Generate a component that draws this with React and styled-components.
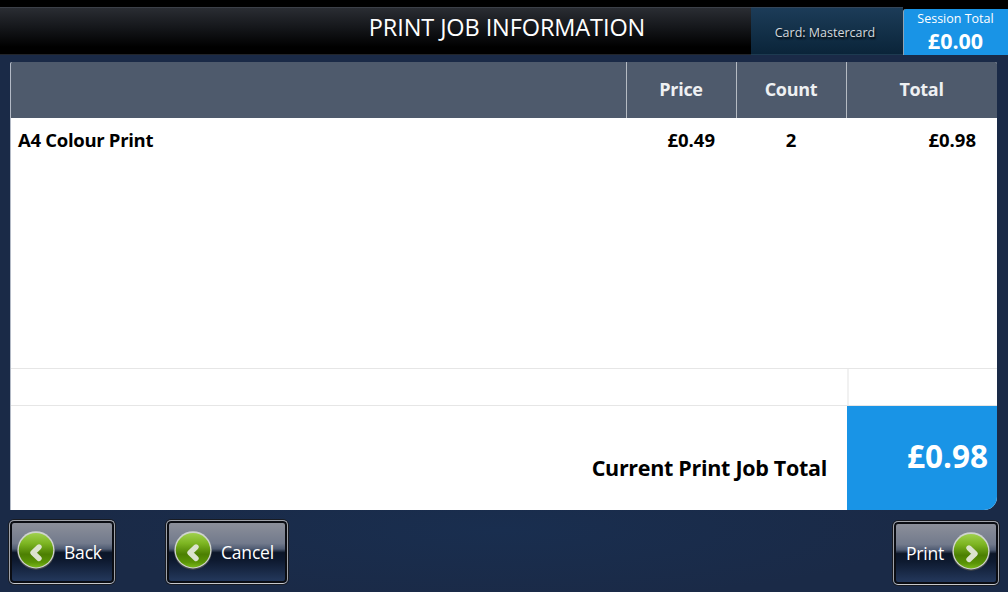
import React from 'react'
import styled, {createGlobalStyle} from 'styled-components'

const GlobalStyle = createGlobalStyle`
  html, body {
    margin: 0;
    padding: 0;
    height: 100%;
    background: #1a2b49;
  }
  * {
    box-sizing: border-box;
  }
`

const rows = [
  {name: 'A4 Colour Print', price: '£0.49', count: '2', total: '£0.98'},
]

const RoundArrow = ({flip}) => (
  <ArrowIcon width="38" height="39" viewBox="0 0 38 39">
    <defs>
      <linearGradient id={flip ? 'ballR' : 'ballL'} x1="0" y1="0" x2="0" y2="1">
        <stop offset="0" stopColor="#9fd04e" />
        <stop offset="0.3" stopColor="#7db522" />
        <stop offset="0.62" stopColor="#4c7f02" />
        <stop offset="0.85" stopColor="#5a9406" />
        <stop offset="1" stopColor="#7ab81a" />
      </linearGradient>
    </defs>
    <circle cx="19" cy="20" r="18.8" fill="#45484a" />
    <circle cx="19" cy="18.8" r="18.6" fill="#cfd4cf" />
    <circle cx="19" cy="19.2" r="17.2" fill={`url(#${flip ? 'ballR' : 'ballL'})`} />
    <path
      d={flip ? 'M17 16 L23 21.8 L17 27.5' : 'M22 16 L16 21.8 L22 27.5'}
      fill="none"
      stroke="#dce3cf"
      strokeWidth="5.4"
      strokeLinecap="round"
      strokeLinejoin="round"
    />
  </ArrowIcon>
)

export default function App() {
  return (
    <Screen>
      <GlobalStyle />
      <TopBar>
        <Title>PRINT JOB INFORMATION</Title>
        <CardBox>Card: Mastercard</CardBox>
        <SessionBox>
          <SessionLabel>Session Total</SessionLabel>
          <SessionValue>£0.00</SessionValue>
        </SessionBox>
      </TopBar>

      <Panel>
        <HeadRow>
          <HeadCell />
          <HeadCell $divider>Price</HeadCell>
          <HeadCell $divider>Count</HeadCell>
          <HeadCell $divider>Total</HeadCell>
        </HeadRow>
        <ItemList>
          {rows.map((row) => (
            <ItemRow key={row.name}>
              <ItemName>{row.name}</ItemName>
              <ItemPrice>{row.price}</ItemPrice>
              <ItemCount>{row.count}</ItemCount>
              <ItemTotal>{row.total}</ItemTotal>
            </ItemRow>
          ))}
        </ItemList>
        <SpacerRow>
          <SpacerMain />
          <SpacerSide />
        </SpacerRow>
        <TotalRow>
          <TotalLabel>Current Print Job Total</TotalLabel>
          <TotalValue>£0.98</TotalValue>
        </TotalRow>
      </Panel>

      <BottomBar>
        <NavGroup>
          <NavButton $width={106}>
            <RoundArrow />
            <span>Back</span>
          </NavButton>
          <NavButton $width={122}>
            <RoundArrow />
            <span>Cancel</span>
          </NavButton>
        </NavGroup>
        <NavButton $width={106} $right>
          <span>Print</span>
          <RoundArrow flip />
        </NavButton>
      </BottomBar>
    </Screen>
  )
}

const Screen = styled.div`
  display: flex;
  flex-direction: column;
  width: 1008px;
  height: 592px;
  overflow: hidden;
  font-family: "Open Sans", "Noto Sans", sans-serif;
  background: radial-gradient(ellipse 420px 70px at 500px 530px, #192e4f, #1a2a47);
`

const TopBar = styled.header`
  display: flex;
  flex: none;
  height: 55px;
  padding-top: 7px;
  background: #000;
`

const Title = styled.h1`
  flex: 1;
  margin: 0;
  padding-top: 3px;
  padding-left: 263px;
  text-align: center;
  font-size: 23.5px;
  letter-spacing: -0.1px;
  line-height: 32px;
  font-weight: 400;
  color: #fff;
  border-top: 1px solid #3c4048;
  border-bottom: 1px solid #22252b;
  background: linear-gradient(#2a2d33, #16181c 40%, #000 85%);
`

const CardBox = styled.div`
  display: flex;
  align-items: center;
  justify-content: center;
  flex: none;
  width: 152px;
  padding: 2px 4px 0 0;
  font-size: 12.5px;
  color: #d4d9dd;
  text-shadow: 1px 2px 2px #000;
  border-top: 1px solid #34465a;
  border-bottom: 1px solid #1d3a50;
  background: linear-gradient(#1c3c58, #0a2439);
`

const SessionBox = styled.div`
  display: flex;
  flex-direction: column;
  align-items: center;
  flex: none;
  width: 105px;
  margin-top: 2px;
  padding-right: 1px;
  border-left: 1px solid #8fa3b3;
  border-top-left-radius: 3px;
  color: #fff;
  background: #1994e6;
`

const SessionLabel = styled.div`
  margin-top: 2px;
  font-size: 12.5px;
  line-height: 15px;
`

const SessionValue = styled.div`
  font-size: 21.5px;
  font-weight: 700;
`

const Panel = styled.main`
  display: flex;
  flex-direction: column;
  flex: none;
  width: 987px;
  height: 448px;
  margin: 7px 0 0 10px;
  border-left: 1px solid #b3bac6;
  border-radius: 2px 2px 13px 0;
  overflow: hidden;
  background: #fff;
`

const HeadRow = styled.div`
  display: grid;
  grid-template-columns: 615px 110px 110px 1fr;
  flex: none;
  height: 56px;
  background: #4e5a6c;
`

const HeadCell = styled.div`
  display: flex;
  align-items: center;
  justify-content: center;
  padding: 0 1px 2px 0;
  font-size: 18px;
  letter-spacing: -0.3px;
  font-weight: 700;
  color: #eef0f2;
  border-left: ${(p) => (p.$divider ? '1px solid #b5bbc3' : 'none')};
`

const ItemList = styled.div`
  flex: none;
  height: 250px;
`

const ItemRow = styled.div`
  display: grid;
  grid-template-columns: 615px 110px 110px 1fr;
  height: 43px;
  align-items: center;
  font-size: 18.5px;
  letter-spacing: -0.3px;
  font-weight: 700;
  color: #000;
`

const ItemName = styled.div`
  padding-left: 7px;
`

const ItemPrice = styled.div`
  text-align: right;
  padding-right: 21px;
  letter-spacing: 0;
`

const ItemCount = styled.div`
  text-align: center;
`

const ItemTotal = styled.div`
  text-align: right;
  padding-right: 21px;
  letter-spacing: 0;
`

const SpacerRow = styled.div`
  display: flex;
  flex: none;
  height: 38px;
  border-top: 1px solid #e6e6e6;
  border-bottom: 1px solid #e6e6e6;
`

const SpacerMain = styled.div`
  width: 836px;
`

const SpacerSide = styled.div`
  flex: 1;
  border-left: 2px solid #f1f1f1;
`

const TotalRow = styled.div`
  display: flex;
  flex: 1;
`

const TotalLabel = styled.div`
  width: 836px;
  padding: 47px 20px 0 0;
  text-align: right;
  font-size: 21.5px;
  letter-spacing: -0.3px;
  line-height: 30px;
  font-weight: 700;
  color: #000;
`

const TotalValue = styled.div`
  flex: 1;
  padding: 28px 9px 0 0;
  text-align: right;
  font-size: 31.5px;
  line-height: 44px;
  font-weight: 700;
  color: #fff;
  background: #1994e6;
`

const BottomBar = styled.footer`
  display: flex;
  justify-content: space-between;
  padding: 10px 9px 0 9px;
`

const NavGroup = styled.div`
  display: flex;
  gap: 51px;
`

const NavButton = styled.button`
  display: flex;
  align-items: center;
  justify-content: ${(p) => (p.$right ? 'flex-end' : 'flex-start')};
  gap: ${(p) => (p.$right ? '8px' : '9px')};
  width: ${(p) => p.$width}px;
  height: 64px;
  margin-top: ${(p) => (p.$right ? '1px' : '0')};
  padding: ${(p) => (p.$right ? '0 8px 0 0' : '0 0 0 7px')};
  font-family: inherit;
  font-size: 17.5px;
  letter-spacing: -0.2px;
  color: #fff;
  border: 1px solid #9fa2a9;
  border-bottom-color: #c6c8cc;
  border-radius: 5px;
  box-shadow: inset 0 0 0 2px #0b0d13, 0 0 0 1px #181b22;
  background: linear-gradient(#8e919b, #727a8c 36%, #4f5b72 45%, #0c1628 51%, #0e1a30 64%, #263b60 100%);
`

const ArrowIcon = styled.svg`
  flex: none;
  margin-bottom: 3px;
`
